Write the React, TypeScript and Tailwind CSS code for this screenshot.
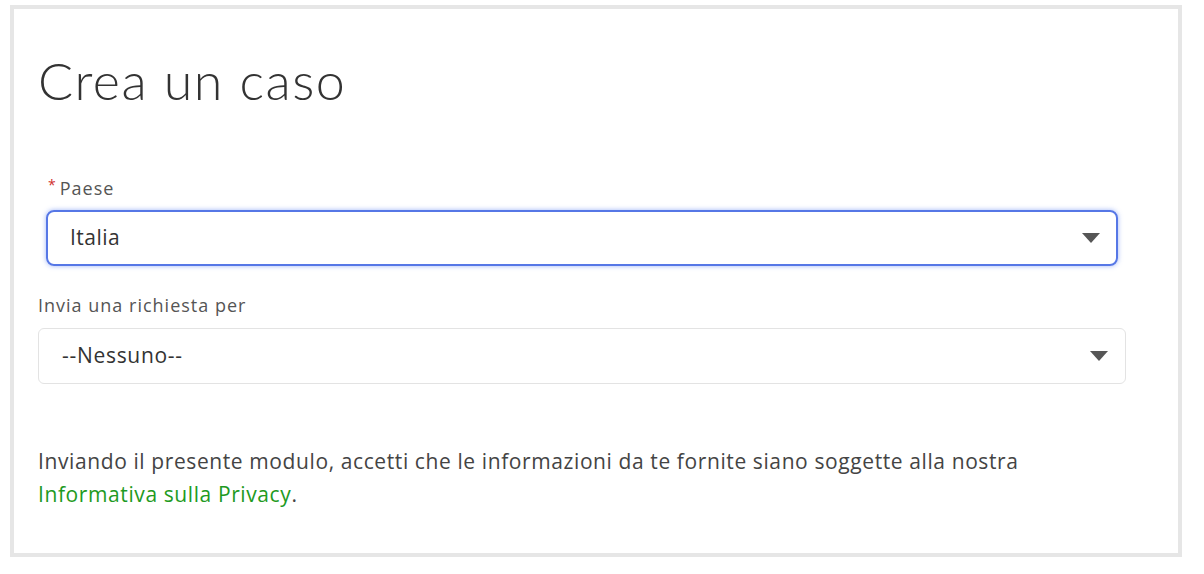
import React from "react";

function Caret() {
  return (
    <svg width="18" height="10" viewBox="0 0 18 10" className="shrink-0">
      <polygon points="0,0 18,0 9,10" fill="#565656" />
    </svg>
  );
}

export default function App() {
  return (
    <div
      className="w-[1204px] h-[574px] bg-white pt-[5px] pl-[10px]"
      style={{ fontFamily: "'Open Sans', Lato, sans-serif" }}
    >
      <div className="w-[1172px] h-[552px] border-4 border-[#e6e6e6] pl-6 pr-[52px] pt-[45px] flex flex-col">
        <h1
          className="text-[52px] leading-none font-light tracking-[1.5px] text-[#333]"
          style={{ fontFamily: "Lato, sans-serif" }}
        >
          Crea un caso
        </h1>

        <label className="mt-[70px] text-[18px] leading-[24px] tracking-[1px] text-[#555] flex items-start">
          <span className="text-[#d0312d] text-[14px] leading-[18px] ml-[10px] mr-[3px]">*</span>
          <span>Paese</span>
        </label>
        <div className="mt-[10px] mx-2 h-[56px] rounded-lg border-2 border-[#5677e6] shadow-[0_0_5px_rgba(80,120,240,0.55)] flex items-center justify-between pl-[22px] pr-[16px]">
          <span className="text-[21px] tracking-[0.5px] text-[#333]">Italia</span>
          <Caret />
        </div>

        <label className="mt-[27px] text-[18px] leading-[24px] tracking-[1px] text-[#555]">Invia una richiesta per</label>
        <div className="mt-[11px] h-[56px] rounded-md border border-[#e3e3e3] flex items-center justify-between pl-[23px] pr-[17px]">
          <span className="text-[21px] tracking-[0.7px] text-[#333]">--Nessuno--</span>
          <Caret />
        </div>

        <p className="mt-[61px] text-[21px] leading-[33px] tracking-[0.6px] text-[#444]">
          Inviando il presente modulo, accetti che le informazioni da te fornite siano soggette alla nostra
          <br />
          <a className="text-[#1e9a22]">Informativa sulla Privacy</a>.
        </p>
      </div>
    </div>
  );
}
